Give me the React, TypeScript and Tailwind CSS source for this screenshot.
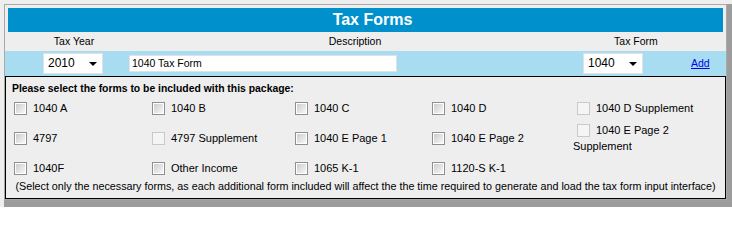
import type { ReactNode } from 'react';

type Form = { label: ReactNode; disabled?: boolean };

const rows: Form[][] = [
  [
    { label: '1040 A' },
    { label: '1040 B' },
    { label: '1040 C' },
    { label: '1040 D' },
    { label: '1040 D Supplement', disabled: true },
  ],
  [
    { label: '4797' },
    { label: '4797 Supplement', disabled: true },
    { label: '1040 E Page 1' },
    { label: '1040 E Page 2' },
    { label: '1040 E Page 2 Supplement', disabled: true },
  ],
  [
    { label: '1040F' },
    { label: 'Other Income' },
    { label: '1065 K-1' },
    { label: '1120-S K-1' },
  ],
];

function Checkbox({ disabled }: { disabled?: boolean }) {
  if (disabled) {
    return (
      <span className="inline-block align-middle w-[13px] h-[13px] ml-[4px] mr-[6px] border border-[#c9c9c9] bg-[#f5f5f5]" />
    );
  }
  return (
    <span className="inline-flex align-middle w-[13px] h-[13px] ml-[4px] mr-[6px] border border-[#8f8f8f] bg-white p-[1px]">
      <span className="flex-1 bg-gradient-to-br from-[#cdcdcd] to-[#f7f7f7]" />
    </span>
  );
}

function Select({ value }: { value: string }) {
  return (
    <div className="flex items-center justify-between w-[60px] h-[21px] bg-white border border-[#e2e2e2] pl-[4px] pr-[5px] text-[12px]">
      <span>{value}</span>
      <span className="w-0 h-0 border-l-[4px] border-r-[4px] border-t-[4px] border-l-transparent border-r-transparent border-t-black" />
    </div>
  );
}

export default function App() {
  return (
    <div className="h-[207px] overflow-hidden bg-[#eeeeee] pt-[4px] pl-[4px] text-[11px] leading-[13px] text-black font-['Liberation_Sans',Arial,sans-serif]">
      <div className="w-[723px] h-[196px] border border-[#a9a9a9] bg-[#eeeeee] flex flex-col shadow-[5px_0_0_#9c9c9c,0_5px_0_#9c9c9c,5px_5px_0_#9c9c9c,0_9px_0_#9c9c9c,5px_9px_0_#9c9c9c]">
        {/* Header */}
        <div className="mx-[3px] mt-[3px] h-[24px] bg-[#0091cd] flex items-center justify-center pl-[14px]">
          <h1 className="text-white font-bold text-[16px] leading-[18px]">Tax Forms</h1>
        </div>

        {/* Column labels */}
        <div className="flex items-center h-[19px] text-[10.5px]">
          <div className="w-[138px] text-center">Tax Year</div>
          <div className="w-[424px] text-center">Description</div>
          <div className="w-[138px] text-center">Tax Form</div>
        </div>

        {/* Inputs */}
        <div className="flex items-center h-[25px] bg-[#a8dcf0]">
          <div className="ml-[38px]">
            <Select value="2010" />
          </div>
          <div className="ml-[26px] w-[268px] h-[17px] bg-white border border-[#e2e2e2] flex items-center pl-[2px] text-[10.5px]">
            1040 Tax Form
          </div>
          <div className="ml-[186px]">
            <Select value="1040" />
          </div>
          <a href="#" className="ml-[48px] text-[#0000ee] underline text-[10.5px]">
            Add
          </a>
        </div>

        {/* Forms */}
        <div className="flex-1 border border-black">
          <div className="h-[16px] pt-[5px] pl-[6px] font-bold text-[10.4px]">
            Please select the forms to be included with this package:
          </div>
          <div className="ml-[4px] grid grid-cols-[138px_143px_137px_145px_1fr] auto-rows-[30px] items-center">
            {rows.map((row) =>
              row.map((f, i) => (
                <div key={`${f.label}-${i}`} className="leading-[15px]">
                  <Checkbox disabled={f.disabled} />
                  <span className="align-middle">{f.label}</span>
                </div>
              )),
            )}
          </div>
          <p className="-mt-[3px] text-center text-[10.75px]">
            (Select only the necessary forms, as each additional form included will affect the the time required to
            generate and load the tax form input interface)
          </p>
        </div>
      </div>
    </div>
  );
}
